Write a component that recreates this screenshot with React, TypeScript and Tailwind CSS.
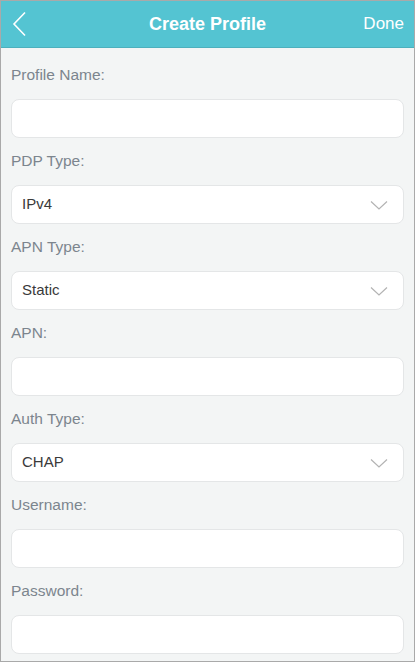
import React from 'react';

type Field = { label: string; value?: string; select?: boolean };

const fields: Field[] = [
  { label: 'Profile Name:' },
  { label: 'PDP Type:', value: 'IPv4', select: true },
  { label: 'APN Type:', value: 'Static', select: true },
  { label: 'APN:' },
  { label: 'Auth Type:', value: 'CHAP', select: true },
  { label: 'Username:' },
  { label: 'Password:' },
];

function ChevronDown() {
  return (
    <svg width="18" height="10" viewBox="0 0 18 10" fill="none">
      <path d="M1 1.5l8 7.5 8-7.5" stroke="#b3b3b3" strokeWidth="1.2" />
    </svg>
  );
}

function App() {
  return (
    <div
      className="w-[415px] h-[662px] overflow-hidden border border-[#a9a9a9] bg-[#f3f5f5] flex flex-col"
      style={{ fontFamily: '"Liberation Sans", Arial, sans-serif' }}
    >
      <header className="h-[47px] shrink-0 bg-[#54c4d2] border-b border-[#4cb0bd] flex items-center justify-between px-[10px] relative">
        <svg width="16" height="26" viewBox="0 0 16 26" fill="none" className="ml-[1px]">
          <path d="M13 1.5L2 13l11 11.5" stroke="white" strokeWidth="1.6" />
        </svg>
        <h1 className="absolute left-0 right-0 text-center text-[18px] font-bold text-white pointer-events-none">
          Create Profile
        </h1>
        <span className="text-[17px] text-white">Done</span>
      </header>

      <main className="flex-1 px-[10px] pt-[17px]">
        {fields.map((f) => (
          <div key={f.label} className="mb-[13px]">
            <div className="h-[20px] leading-[20px] text-[15.5px] text-[#7c858e] mb-[14px]">{f.label}</div>
            <div className="h-[39px] bg-white border border-[#e4e6e7] rounded-[8px] flex items-center justify-between pl-[10px] pr-[15px]">
              <span className="text-[15px] text-[#3a3a3a]">{f.value ?? ''}</span>
              {f.select && <ChevronDown />}
            </div>
          </div>
        ))}
      </main>
    </div>
  );
}

export default App;
